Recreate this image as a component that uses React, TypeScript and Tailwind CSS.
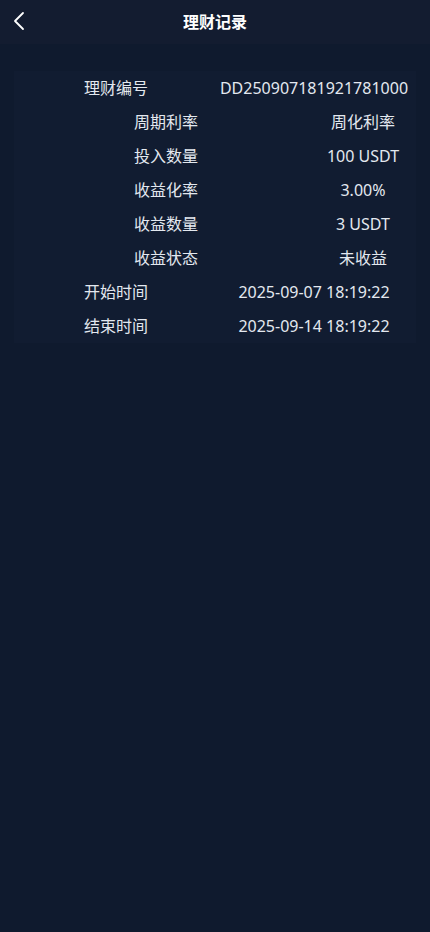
import React from "react";

type Row = { label: string; value: string; kind: "a" | "b" };

const rows: Row[] = [
  { label: "理财编号", value: "DD250907181921781000", kind: "a" },
  { label: "周期利率", value: "周化利率", kind: "b" },
  { label: "投入数量", value: "100 USDT", kind: "b" },
  { label: "收益化率", value: "3.00%", kind: "b" },
  { label: "收益数量", value: "3 USDT", kind: "b" },
  { label: "收益状态", value: "未收益", kind: "b" },
  { label: "开始时间", value: "2025-09-07 18:19:22", kind: "a" },
  { label: "结束时间", value: "2025-09-14 18:19:22", kind: "a" },
];

export default function App() {
  return (
    <div
      className="min-h-[932px] w-full bg-[#0f1a2e] text-[#e3e8ef]"
      style={{ fontFamily: '"Noto Sans", "Noto Sans CJK SC", sans-serif' }}
    >
      <header className="relative flex h-[44px] items-center justify-center bg-[#131c30]">
        <svg
          className="absolute left-[12px] top-[11px]"
          width="16"
          height="20"
          viewBox="0 0 16 20"
          fill="none"
          stroke="#ffffff"
          strokeWidth="1.8"
          strokeLinecap="round"
          strokeLinejoin="round"
        >
          <path d="M11 2 L3 10 L11 18" />
        </svg>
        <h1 className="text-[16px] font-bold text-white">理财记录</h1>
      </header>
      <div className="px-[14px] pt-[27px]">
        <div className="w-[402px] overflow-hidden bg-[#111c31]">
          {rows.map((r) => (
            <div key={r.label} className="flex h-[34px] items-center text-[16px]">
              {r.kind === "a" ? (
                <>
                  <div className="ml-[56px] w-[92px] shrink-0 text-center">{r.label}</div>
                  <div className="ml-[56px] w-[192px] shrink-0 text-center whitespace-nowrap">{r.value}</div>
                </>
              ) : (
                <>
                  <div className="ml-[106px] w-[92px] shrink-0 text-center">{r.label}</div>
                  <div className="ml-[96px] w-[110px] shrink-0 text-center whitespace-nowrap">{r.value}</div>
                </>
              )}
            </div>
          ))}
        </div>
      </div>
    </div>
  );
}
